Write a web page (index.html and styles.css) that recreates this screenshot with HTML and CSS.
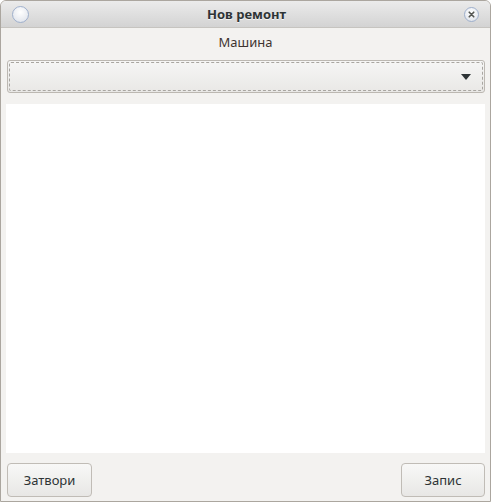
FILE: index.html
```html
<!DOCTYPE html>
<html lang="bg">
<head>
<meta charset="utf-8">
<title>Нов ремонт</title>
<link rel="stylesheet" href="styles.css">
</head>
<body>
<div class="window">
  <div class="titlebar">
    <span class="wbtn circle"></span>
    <span class="title">Нов ремонт</span>
    <span class="wbtn close">
      <svg width="12" height="12" viewBox="0 0 12 12"><path d="M3 3 L9 9 M9 3 L3 9" stroke="#555753" stroke-width="2.2" stroke-linecap="round"/></svg>
    </span>
  </div>
  <div class="content">
    <div class="label">Машина</div>
    <div class="combo">
      <span class="focus"></span>
      <svg class="arrow" width="10" height="6" viewBox="0 0 10 6"><path d="M0 0 H10 L5 6 Z" fill="#2e3436"/></svg>
    </div>
    <div class="view"></div>
    <div class="actions">
      <button class="btn close-btn">Затвори</button>
      <button class="btn save-btn">Запис</button>
    </div>
  </div>
</div>
</body>
</html>
```
FILE: styles.css
```css
html, body {
  margin: 0;
  padding: 0;
  background: #ffffff;
}
.window {
  box-sizing: border-box;
  width: 491px;
  height: 502px;
  border: 1px solid #aba69f;
  border-radius: 6px 6px 0 0;
  background: #f3f2f0;
  display: flex;
  flex-direction: column;
  overflow: hidden;
  font-family: "Noto Sans", "Open Sans", sans-serif;
  color: #2e3436;
}
.titlebar {
  height: 26px;
  flex: none;
  background: linear-gradient(#ebebeb, #d3d3d3);
  border-bottom: 1px solid #c6c4c0;
  display: flex;
  align-items: center;
  justify-content: space-between;
  padding: 0 11px 0 11px;
  box-sizing: content-box;
}
.title {
  font-weight: bold;
  font-size: 13px;
  color: #2e3436;
  text-shadow: 0 1px 0 rgba(255,255,255,0.7);
  margin-left: 0;
}
.wbtn {
  width: 15px;
  height: 15px;
  border-radius: 50%;
  box-sizing: border-box;
  border: 1px solid #9fb0cc;
  background: radial-gradient(circle at 50% 35%, #ffffff, #e6e9ef 70%, #d0d6e0);
  display: flex;
  align-items: center;
  justify-content: center;
}
.circle {
  width: 17px;
  height: 17px;
}
.close svg {
  width: 9px;
  height: 9px;
}
.content {
  flex: 1;
  display: flex;
  flex-direction: column;
  padding: 0 5px 4px 5px;
}
.label {
  height: 32px;
  display: flex;
  align-items: flex-start;
  justify-content: center;
  font-size: 13px;
  line-height: 18px;
  color: #3f3530;
  padding-top: 5px;
  box-sizing: border-box;
}
.combo {
  position: relative;
  height: 33px;
  margin: 0 0 11px 1px;
  box-sizing: border-box;
  border: 1px solid #bcb8b2;
  border-radius: 3px;
  background: linear-gradient(#f6f6f5, #e9e8e6);
}
.focus {
  position: absolute;
  inset: 1px;
  border: 1px dashed #a9a6a1;
  border-radius: 2px;
}
.arrow {
  position: absolute;
  right: 13px;
  top: 13px;
}
.view {
  flex: 1;
  background: #ffffff;
  margin-bottom: 10px;
}
.actions {
  display: flex;
  justify-content: space-between;
  padding-left: 1px;
}
.btn {
  height: 34px;
  box-sizing: border-box;
  border: 1px solid #c0bcb6;
  border-radius: 4px;
  background: linear-gradient(#f8f8f7, #e8e7e5);
  font-family: "Noto Sans", "Open Sans", sans-serif;
  font-size: 13px;
  color: #2e3436;
  padding: 0;
}
.close-btn {
  width: 85px;
}
.save-btn {
  width: 84px;
}
```
